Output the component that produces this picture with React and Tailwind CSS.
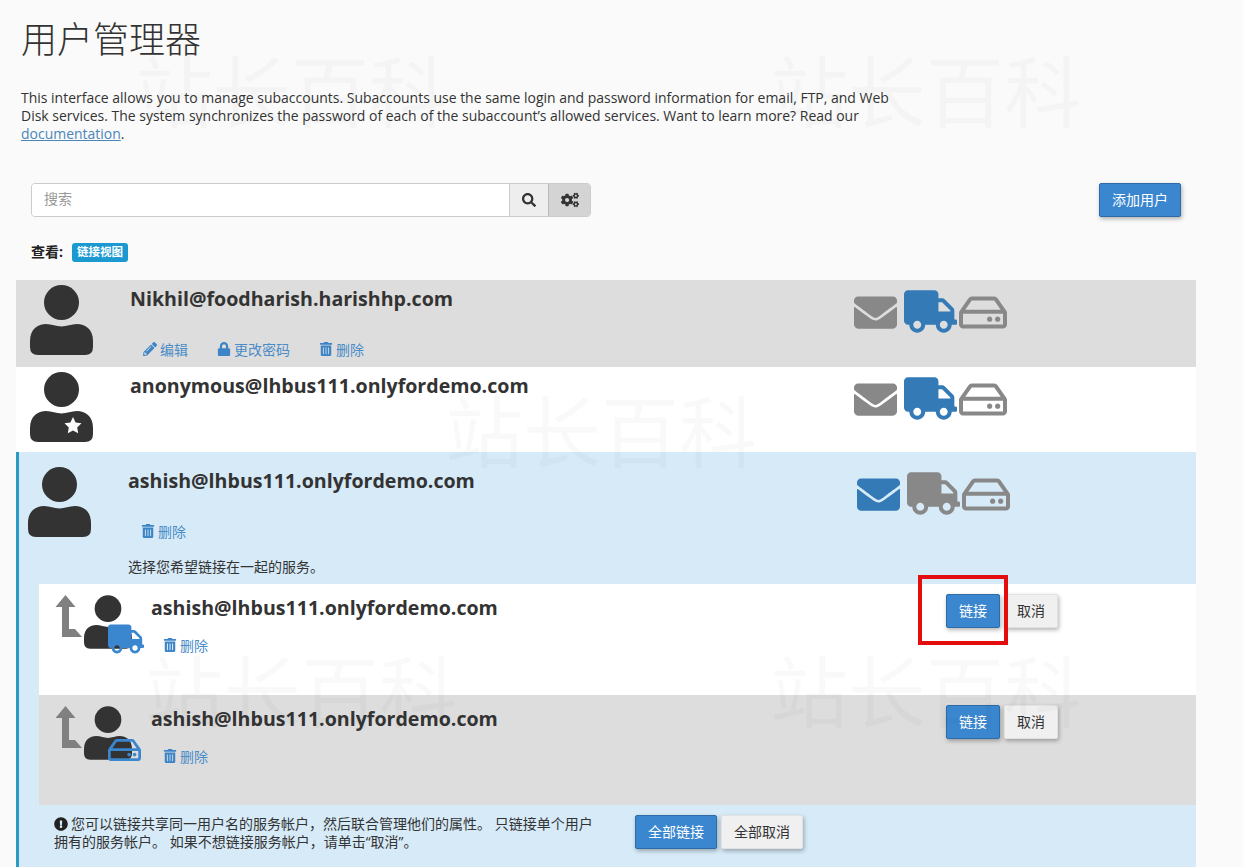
import React from "react";
import { FaEnvelope, FaTruck, FaRegHdd, FaPencilAlt, FaLock, FaTrashAlt, FaSearch, FaCogs, FaExclamationCircle } from "react-icons/fa";

function Person({ star, className }) {
    return (
        <svg viewBox="0 0 63 70" className={className}>
            <circle cx="31.5" cy="17.5" r="17.5" fill="#333" />
            <path d="M0 56C0 44 8 39 16 39C22 39 26 41.500 31.500 41.500C37 41.500 41 39 47 39C55 39 63 44 63 56V62Q63 70 55 70H8Q0 70 0 62Z" fill="#333" />
            {star && <path d="M43 45l2.600 5.400 5.900.9-4.300 4.100 1 5.900-5.200-2.800-5.200 2.800 1-5.900-4.300-4.100 5.900-.9z" fill="#fff" />}
        </svg>
    );
}

function ServiceIcons({ mail, truck, disk, className }) {
    return (
        <div className={"flex items-center " + className}>
            <FaEnvelope className={"w-[43px] h-[43px] mt-[1px] " + mail} />
            <FaTruck className={"w-[53px] h-[43px] ml-[7px] " + truck} />
            <FaRegHdd className={"w-[48px] h-[43px] ml-[2px] mt-[1px] " + disk} />
        </div>
    );
}

function Action({ icon: Icon, label, className }) {
    return (
        <span className={"flex items-center gap-[3px] text-[14px] text-[#4a8cc7] " + className}>
            <Icon className="w-[14px] h-[14px] text-[#3d85c6]" />
            {label}
        </span>
    );
}

function LinkArrow() {
    return (
        <svg viewBox="0 0 28 42" className="w-[28px] h-[42px] mt-[1px]">
            <path d="M11.500 0L21.500 12H15V34H21L28 42H8V12H1.500Z" fill="#808080" />
        </svg>
    );
}

function Button({ primary, className, children }) {
    const look = primary
        ? "bg-[#3a87cf] border-[#2c6da8] text-white"
        : "bg-[#f0f0f0] border-[#e2e2e2] text-[#333]";
    return (
        <button className={"h-[34px] border rounded-[2px] text-[14px] pb-[2px] shadow-[1px_2px_4px_rgba(0,0,0,0.3)] " + look + " " + className}>
            {children}
        </button>
    );
}

function Watermark({ className }) {
    return (
        <span className={"absolute text-[78px] leading-none text-black/[0.025] whitespace-nowrap pointer-events-none " + className}>
            站长百科
        </span>
    );
}

export default function App() {
    return (
        <div className="relative h-[867px] overflow-hidden bg-[#fafafa] text-[#333] font-['Open_Sans','Noto_Sans_CJK_SC',sans-serif]">
            <div className="pl-[21px] pt-[17px]">
                <h1 className="text-[36px] leading-[46px] font-light">用户管理器</h1>
                <p className="mt-[26px] w-[880px] text-[13.97px] leading-[18px]">
                    This interface allows you to manage subaccounts. Subaccounts use the same login and password information for email, FTP, and Web Disk services. The system synchronizes the password of each of the subaccount’s allowed services. Want to learn more? Read our <a className="text-[#4a86b8] underline">documentation</a>.
                </p>
            </div>

            {/* Search bar */}
            <div className="flex pl-[31px] pr-[62px] mt-[40px]">
                <div className="flex w-[560px] h-[34px] border border-[#ccc] rounded-[4px] overflow-hidden">
                    <div className="flex-1 bg-white pl-[12px] text-[14px] leading-[30px] text-[#999]">搜索</div>
                    <div className="w-[39px] flex items-center justify-center bg-[#eee] border-l border-[#ccc]">
                        <FaSearch className="w-[14px] h-[14px] text-[#333]" />
                    </div>
                    <div className="w-[42px] flex items-center justify-center bg-[#d4d4d4] border-l border-[#bbb]">
                        <FaCogs className="w-[18px] h-[18px] text-[#333]" />
                    </div>
                </div>
                <Button primary className="ml-auto w-[82px]">添加用户</Button>
            </div>

            <div className="flex items-center pl-[31px] mt-[26px] h-[19px]">
                <span className="text-[14px] leading-[16px] font-bold text-[#222] mb-[2px]">查看:</span>
                <span className="ml-[9px] w-[56px] h-[19px] rounded-[3px] bg-[#1b9ad2] text-white text-[11.5px] font-bold leading-[18px] text-center">链接视图</span>
            </div>

            <div className="ml-[16px] w-[1180px] mt-[18px]">
                {/* Row 1 */}
                <div className="flex h-[87px] bg-[#ddd] pl-[14px] pt-[5px]">
                    <Person className="w-[63px] h-[70px] shrink-0" />
                    <div className="w-[761px] pl-[37px] shrink-0">
                        <div className="text-[19.6px] leading-[28px] font-bold">Nikhil@foodharish.harishhp.com</div>
                        <div className="flex pl-[13px] mt-[26px] h-[20px]">
                            <Action icon={FaPencilAlt} label="编辑" />
                            <Action icon={FaLock} label="更改密码" className="ml-[29px]" />
                            <Action icon={FaTrashAlt} label="删除" className="ml-[29px]" />
                        </div>
                    </div>
                    <ServiceIcons mail="text-[#888]" truck="text-[#337ab7]" disk="text-[#888]" className="h-[43px] mt-[5px]" />
                </div>

                {/* Row 2 */}
                <div className="flex h-[85px] bg-white pl-[14px] pt-[5px]">
                    <Person star className="w-[63px] h-[70px] shrink-0" />
                    <div className="w-[761px] pl-[37px] shrink-0">
                        <div className="text-[19.6px] leading-[28px] font-bold">anonymous@lhbus111.onlyfordemo.com</div>
                    </div>
                    <ServiceIcons mail="text-[#888]" truck="text-[#337ab7]" disk="text-[#888]" className="h-[43px] mt-[5px]" />
                </div>

                {/* Row 3, expanded */}
                <div className="h-[415px] bg-[#d6eaf8] border-l-[3px] border-[#2a9bc4]">
                    <div className="flex pl-[9px] pt-[15px]">
                        <Person className="w-[63px] h-[70px] shrink-0" />
                        <div className="w-[766px] pl-[37px] shrink-0">
                            <div className="text-[19.6px] leading-[28px] font-bold">ashish@lhbus111.onlyfordemo.com</div>
                            <Action icon={FaTrashAlt} label="删除" className="ml-[13px] mt-[26px] h-[20px]" />
                        </div>
                        <ServiceIcons mail="text-[#337ab7]" truck="text-[#888]" disk="text-[#888]" className="h-[43px] mt-[5px]" />
                    </div>
                    <div className="pl-[109px] mt-[17px] text-[14px] leading-[18px]">选择您希望链接在一起的服务。</div>

                    <div className="ml-[20px] mt-[8px]">
                        <div className="flex h-[111px] bg-white pl-[15px] pt-[10px]">
                            <LinkArrow />
                            <div className="relative w-[60px] ml-[2px] shrink-0">
                                <Person className="w-[48px] h-[56px]" />
                                <FaTruck className="absolute left-[24px] top-[30px] w-[36px] h-[30px] text-[#3a87cf]" />
                            </div>
                            <div className="w-[802px] pl-[7px] shrink-0">
                                <div className="text-[19.6px] leading-[28px] font-bold">ashish@lhbus111.onlyfordemo.com</div>
                                <Action icon={FaTrashAlt} label="删除" className="ml-[12px] mt-[13px] h-[20px]" />
                            </div>
                            <Button primary className="w-[54px]">链接</Button>
                            <Button className="w-[54px] ml-[4px]">取消</Button>
                        </div>
                        <div className="flex h-[110px] bg-[#ddd] pl-[15px] pt-[10px]">
                            <LinkArrow />
                            <div className="relative w-[60px] ml-[2px] shrink-0">
                                <Person className="w-[48px] h-[56px]" />
                                <FaRegHdd className="absolute left-[24px] top-[30px] w-[33px] h-[30px] text-[#3a87cf]" />
                            </div>
                            <div className="w-[802px] pl-[7px] shrink-0">
                                <div className="text-[19.6px] leading-[28px] font-bold">ashish@lhbus111.onlyfordemo.com</div>
                                <Action icon={FaTrashAlt} label="删除" className="ml-[12px] mt-[13px] h-[20px]" />
                            </div>
                            <Button primary className="w-[54px]">链接</Button>
                            <Button className="w-[54px] ml-[4px]">取消</Button>
                        </div>
                    </div>

                    <div className="flex pl-[35px] pt-[10px]">
                        <p className="w-[546px] text-[14px] leading-[18px]">
                            <FaExclamationCircle className="inline w-[14px] h-[14px] mr-[3px] mb-[2px] text-[#222]" />
                            您可以链接共享同一用户名的服务帐户，然后联合管理他们的属性。 只链接单个用户拥有的服务帐户。 如果不想链接服务帐户，请单击“取消”。
                        </p>
                        <Button primary className="w-[82px] ml-[35px]">全部链接</Button>
                        <Button className="w-[82px] ml-[4px]">全部取消</Button>
                    </div>
                </div>
            </div>

            {/* Red highlight drawn on top of the screenshot */}
            <div className="absolute left-[918px] top-[575px] w-[90px] h-[70px] border-[4px] border-[#e30d0d]" />

            <Watermark className="left-[135px] top-[53px]" />
            <Watermark className="left-[770px] top-[53px]" />
            <Watermark className="left-[445px] top-[393px]" />
            <Watermark className="left-[145px] top-[653px]" />
            <Watermark className="left-[770px] top-[653px]" />
        </div>
    );
}
